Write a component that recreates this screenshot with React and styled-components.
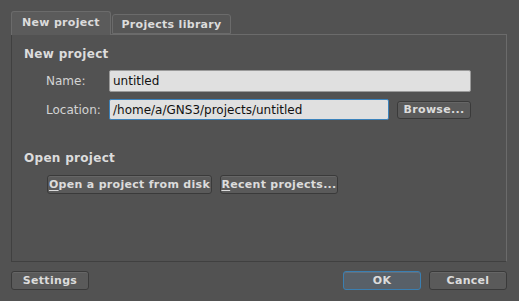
import React from "react";
import styled, { createGlobalStyle } from "styled-components";

const Global = createGlobalStyle`
  html, body { margin: 0; padding: 0; background: #525252; }
  * { box-sizing: border-box; }
  body { font-family: "DejaVu Sans", "Liberation Sans", sans-serif; }
`;

const Dialog = styled.div`
  width: 519px;
  height: 301px;
  padding: 12px 12px 0 11px;
  display: flex;
  flex-direction: column;
`;

const TabBar = styled.div`
  display: flex;
  align-items: flex-end;
  gap: 1px;
  height: 23px;
  position: relative;
  z-index: 1;
  margin-bottom: -1px;
`;

const Tab = styled.div`
  width: ${(p) => p.$w}px;
  height: ${(p) => (p.$active ? 24 : 20)}px;
  margin-bottom: ${(p) => (p.$active ? 0 : 1)}px;
  background: ${(p) => (p.$active ? "#5b5b5b" : "#565656")};
  border: 1px solid #6b6b6b;
  border-bottom: ${(p) => (p.$active ? "none" : "1px solid #6b6b6b")};
  border-radius: 3px 3px 0 0;
  color: #dcdcdc;
  font-weight: bold;
  font-size: 11px;
  letter-spacing: 0.3px;
  display: flex;
  align-items: center;
  justify-content: center;
  padding-bottom: ${(p) => (p.$active ? 2 : 0)}px;
`;

const Panel = styled.div`
  width: 496px;
  height: 228px;
  border-top: 1px solid #6b6b6b;
  border-right: 1px solid #6b6b6b;
  border-left: 1px solid #404040;
  border-bottom: 1px solid #404040;
  padding: 11px 0 0 12px;
  display: flex;
  flex-direction: column;
`;

const Heading = styled.div`
  color: #dcdcdc;
  font-weight: bold;
  font-size: 12px;
  letter-spacing: 0.3px;
  line-height: 16px;
  margin-top: ${(p) => p.$mt || 0}px;
`;

const Form = styled.div`
  display: grid;
  grid-template-columns: 63px auto;
  row-gap: 7px;
  margin: 8px 0 0 22px;
  align-items: center;
`;

const Label = styled.label`
  color: #d4d4d4;
  font-size: 12px;
`;

const Field = styled.div`
  display: flex;
  align-items: center;
  gap: 8px;
`;

const Input = styled.div`
  width: ${(p) => p.$w}px;
  height: ${(p) => p.$h}px;
  background: #e0e0e0;
  border: 1px solid ${(p) => (p.$focus ? "#3b82bb" : "#9a9a9a")};
  border-radius: 2px;
  color: #111;
  font-size: 12px;
  display: flex;
  align-items: center;
  padding-left: 3px;
  white-space: nowrap;
  overflow: hidden;
`;

const Button = styled.div`
  width: ${(p) => p.$w}px;
  height: ${(p) => p.$h || 19}px;
  background: ${(p) => (p.$primary ? "#586068" : "#5a5a5a")};
  border: 1px solid ${(p) => (p.$primary ? "#3a7fb2" : "#3a3a3a")};
  box-shadow: inset 0 1px 0 ${(p) => (p.$primary ? "#66707a" : "#666")};
  border-radius: 3px;
  color: #dcdcdc;
  font-weight: bold;
  font-size: 11px;
  letter-spacing: 0.3px;
  display: flex;
  align-items: center;
  justify-content: center;
  white-space: nowrap;
  u { text-decoration: underline; text-underline-offset: 2px; }
`;

const ButtonRow = styled.div`
  display: flex;
  gap: 8px;
  margin: ${(p) => p.$m};
`;

const Footer = styled.div`
  display: flex;
  align-items: center;
  margin-top: 9px;
  gap: 8px;
`;

const Spacer = styled.div`
  flex: 1;
`;

export default function App() {
  return (
    <>
      <Global />
      <Dialog>
        <TabBar>
          <Tab $active $w={100}>New project</Tab>
          <Tab $w={119}>Projects library</Tab>
        </TabBar>
        <Panel>
          <Heading>New project</Heading>
          <Form>
            <Label>Name:</Label>
            <Field>
              <Input $w={362} $h={22}>untitled</Input>
            </Field>
            <Label>Location:</Label>
            <Field>
              <Input $w={280} $h={21} $focus>/home/a/GNS3/projects/untitled</Input>
              <Button $w={74} $h={18}>Browse...</Button>
            </Field>
          </Form>
          <Heading $mt={30}>Open project</Heading>
          <ButtonRow $m="9px 0 0 23px">
            <Button $w={165}><span><u>O</u>pen a project from disk</span></Button>
            <Button $w={118}><span><u>R</u>ecent projects...</span></Button>
          </ButtonRow>
        </Panel>
        <Footer>
          <Button $w={78}>Settings</Button>
          <Spacer />
          <Button $w={78} $primary>OK</Button>
          <Button $w={78}>Cancel</Button>
        </Footer>
      </Dialog>
    </>
  );
}
